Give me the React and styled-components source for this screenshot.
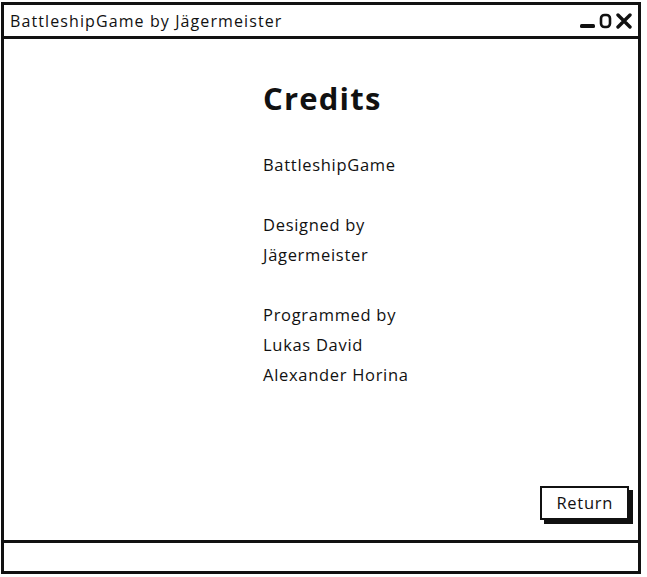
import React from 'react'
import styled, { createGlobalStyle } from 'styled-components'

const GlobalStyle = createGlobalStyle`
    html, body {
        margin: 0;
        padding: 0;
        background: #ffffff;
    }
    body {
        font-family: "Open Sans", "DejaVu Sans", sans-serif;
        color: #111;
    }
`;

const Window = styled.div`
    box-sizing: border-box;
    width: 640px;
    height: 572px;
    margin: 2px 0 0 1px;
    border: 3px solid #111;
    display: flex;
    flex-direction: column;
    background: #fff;
`;

const TitleBar = styled.div`
    height: 31px;
    border-bottom: 3px solid #111;
    display: flex;
    align-items: center;
    justify-content: space-between;
    padding: 0 5px 0 6px;
    font-size: 16px;
    font-weight: 500;
    letter-spacing: 1.1px;
`;

const Controls = styled.div`
    display: flex;
    align-items: center;
    gap: 3px;
`;

const Content = styled.div`
    flex: 1;
    position: relative;
    display: flex;
    justify-content: center;
`;

const Column = styled.div`
    width: 116px;
    padding-top: 36px;
    white-space: nowrap;
`;

const Heading = styled.h1`
    margin: 0 0 29px;
    font-size: 31px;
    font-weight: 700;
    letter-spacing: 1.2px;
    line-height: 46px;
`;

const Line = styled.div`
    font-size: 16.5px;
    font-weight: 500;
    letter-spacing: 0.7px;
    line-height: 30px;
    height: 30px;
`;

const Footer = styled.div`
    position: absolute;
    right: 9px;
    bottom: 20px;
`;

const ReturnButton = styled.button`
    font-family: inherit;
    font-size: 16.5px;
    font-weight: 500;
    letter-spacing: 0.7px;
    color: #111;
    background: #fff;
    border: 2px solid #111;
    box-shadow: 4px 4px 0 #111;
    padding: 3px 14px 4px;
    cursor: pointer;
`;

const StatusBar = styled.div`
    height: 28px;
    border-top: 3px solid #111;
`;

function Minimize() {
    return (
        <svg width="17" height="16" viewBox="0 0 17 16">
            <rect x="1" y="11" width="15" height="4" rx="1.5" fill="#111" />
        </svg>
    )
}

function Maximize() {
    return (
        <svg width="13" height="16" viewBox="0 0 13 16">
            <rect x="2" y="2" width="9" height="12" rx="3.5" fill="none" stroke="#111" strokeWidth="2.6" />
        </svg>
    )
}

function Close() {
    return (
        <svg width="18" height="16" viewBox="0 0 18 16">
            <path d="M3 2 L15 14 M15 2 L3 14" stroke="#111" strokeWidth="3.4" strokeLinecap="round" />
        </svg>
    )
}

const lines = [
    'BattleshipGame',
    '',
    'Designed by',
    'Jägermeister',
    '',
    'Programmed by',
    'Lukas David',
    'Alexander Horina',
]

export default function App() {
    return (
        <>
            <GlobalStyle />
            <Window>
                <TitleBar>
                    <span>BattleshipGame by Jägermeister</span>
                    <Controls>
                        <Minimize />
                        <Maximize />
                        <Close />
                    </Controls>
                </TitleBar>
                <Content>
                    <Column>
                        <Heading>Credits</Heading>
                        {lines.map((text, i) => (
                            <Line key={i}>{text}</Line>
                        ))}
                    </Column>
                    <Footer>
                        <ReturnButton>Return</ReturnButton>
                    </Footer>
                </Content>
                <StatusBar />
            </Window>
        </>
    )
}
